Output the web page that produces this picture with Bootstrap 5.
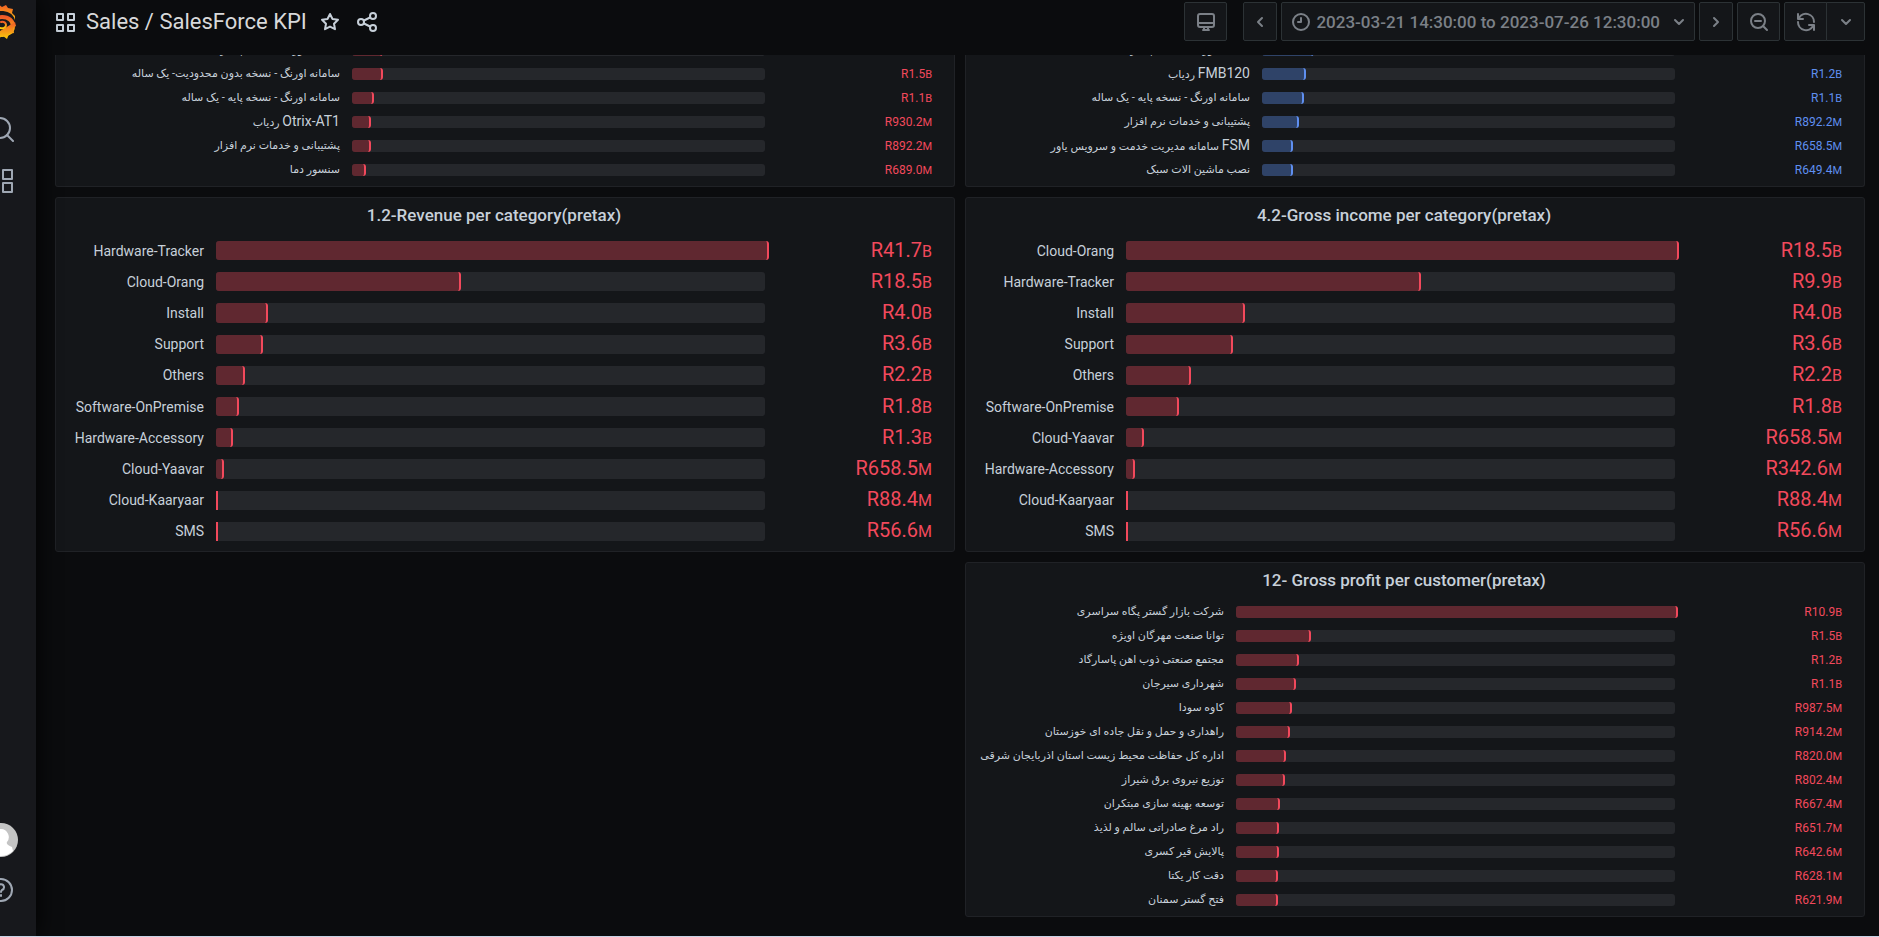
<!DOCTYPE html>
<html lang="en" data-bs-theme="dark">
<head>
<meta charset="utf-8">
<meta name="viewport" content="width=device-width, initial-scale=1">
<title>Sales / SalesForce KPI</title>
<link href="https://cdn.jsdelivr.net/npm/bootstrap@5.3.0/dist/css/bootstrap.min.css" rel="stylesheet">
<style>
:root { --page:#0b0c0e; --panel:#141619; --line:#202226; --ink:#c7d0d9; --dim:#7b8087; --track:#25272b; --hot:#f2495c; --hot-fill:#602830; }
body { background:var(--page); color:var(--ink); font-family:Roboto,"DejaVu Sans",sans-serif; font-size:14px; line-height:20px; border-bottom:1px solid #c9d3e6; }
svg { display:block; fill:none; stroke:currentColor; stroke-width:2; stroke-linecap:round; stroke-linejoin:round; }
.side { width:36px; background:#17181c; box-shadow:0 0 24px #000; z-index:1; color:#9fa7b3; }
.side-nav { width:74px; margin-left:-36px; padding-bottom:33px; }
.side-nav a { color:inherit; }
.logo-link { margin-bottom:76px; }
.help-link { margin-top:20px; }
.topbar { height:55px; padding:2px 14px 0 18px; }
.topbar h1 { font-size:22px; line-height:40px; font-weight:400; color:#d8d9da; margin:0 4px 0 10px; }
.topbar a { color:var(--ink); }
.tool { --bs-btn-color:var(--dim); --bs-btn-bg:var(--panel); --bs-btn-border-color:#2c3235; --bs-btn-border-radius:2px; --bs-btn-hover-bg:#202226; --bs-btn-hover-color:var(--ink); --bs-btn-padding-y:0; --bs-btn-padding-x:0; height:39px; min-width:43px; display:flex; align-items:center; justify-content:center; }
.tool.slim { min-width:34px; }
.tool.drop { min-width:39px; }
.tool.range { padding:0 9px; font-size:17px; line-height:24px; font-weight:500; gap:5px; }
.board { padding:0 14px 0 19px; }
.board .row { --bs-gutter-x:10px; }
.stack { display:flex; flex-direction:column; gap:10px; }
.panel { background:var(--panel); border:1px solid var(--line); border-radius:3px; padding:7px 22px 10px 14px; }
.panel.cut { height:132px; border-top:0; border-radius:0 0 3px 3px; padding-top:0; overflow:hidden; display:flex; flex-direction:column; justify-content:flex-end; }
.panel h2 { font-size:17px; line-height:20px; font-weight:500; color:var(--ink); text-align:center; margin:0 14px 16px 0; }
.bars { list-style:none; margin:0; padding:0; display:grid; gap:12px; grid-auto-rows:12px; }
.bars li { display:grid; grid-template-columns:var(--label) minmax(0,1fr) 167px; grid-template-rows:100%; align-items:center; }
.bars .name { text-align:right; padding-right:12px; white-space:nowrap; font-size:11px; }
.bars .name bdi { font-size:14px; }
.bars .rail { background:var(--track); height:100%; border-radius:3px; }
.bars .fill { display:block; height:100%; background:var(--hot-fill); border-right:2px solid var(--hot); border-radius:3px; }
.bars .tick { border-radius:0; }
.bars .amount { color:var(--hot); text-align:right; font-size:12px; }
.bars .amount span { font-size:11px; }
.blue { --hot:#5f8ff0; --hot-fill:#2f4368; }
.bars.large { height:300px; grid-auto-rows:minmax(0,1fr); }
.bars.large .name { font-size:14px; }
.bars.large .amount { font-size:20px; }
.bars.large .amount span { font-size:16px; }
.l-wide { --label:282px; }
.l-cat { --label:146px; }
.l-cust { --label:256px; }
</style>
</head>
<body class="d-flex min-vh-100 overflow-hidden">
<aside class="side flex-shrink-0 overflow-hidden">
  <nav class="side-nav d-flex flex-column align-items-center h-100" aria-label="Main">
    <a href="#" class="logo-link" aria-label="Home">
      <svg width="32" height="40" viewBox="0 0 32 40"><defs><linearGradient id="sun" x1="0" y1="0" x2="0" y2="1"><stop offset="0" stop-color="#f05a28"/><stop offset="1" stop-color="#fbca0a"/></linearGradient></defs><path fill="url(#sun)" stroke="none" d="M13 4l4 3 4-2 2 3 5 1-1 4 3 3 0 4c-2-7-8-9-14-9-8 0-13 5-13 12l-3-5 2-6 5-3z"/><path stroke="url(#sun)" stroke-width="4" d="M10 24c0-4 3-7 7-7 7 0 11 4 11 9 0 6-5 9-11 9"/><path fill="url(#sun)" stroke="none" d="M30 22l1 4-3 2 1 5-5 1-2 5-4-3-4 2-4-4z"/><path stroke="url(#sun)" stroke-width="2" d="M15 28c4 1 6-1 6-3s-2-4-5-3"/></svg>
    </a>
    <a href="#" aria-label="Search"><svg width="26" height="26" viewBox="0 0 26 26"><circle cx="12" cy="12" r="10"/><path d="M19 19l6 6"/></svg></a>
    <a href="#" class="mt-4" aria-label="Dashboards"><svg width="30" height="30" viewBox="0 0 30 30" stroke-linejoin="miter"><path d="M3 4h9v9H3zM17 4h9v9h-9zM3 17h9v9H3zM17 17h9v9h-9z"/></svg></a>
    <a href="#" class="mt-auto" aria-label="Profile"><svg width="34" height="34" viewBox="0 0 34 34"><circle cx="17" cy="17" r="17" fill="#c4c4c4" stroke="none"/><path fill="#fff" stroke="none" d="M17 6a8 8 0 0 1 6 13c-1 2 1 3 5 5l1 4a17 17 0 0 1-24 0l1-4c4-2 6-3 5-5a8 8 0 0 1 6-13z"/></svg></a>
    <a href="#" class="help-link" aria-label="Help"><svg width="26" height="26" viewBox="0 0 26 26"><circle cx="13" cy="13" r="11"/><path d="M10 10a3 3 0 1 1 4 3q-1 1-1 2M13 18v1"/></svg></a>
  </nav>
</aside>
<main class="flex-grow-1">
  <header class="topbar d-flex align-items-start justify-content-between">
    <div class="d-flex align-items-center">
      <a href="#" aria-label="Dashboards"><svg width="22" height="22" viewBox="0 0 22 22"><path d="M3 3h6v6H3zM14 3h6v6h-6zM3 14h6v6H3zM14 14h6v6h-6z"/></svg></a>
      <h1>Sales / SalesForce KPI</h1>
      <a href="#" class="ms-2" aria-label="Star"><svg width="22" height="22" viewBox="0 0 22 22"><path d="M11 3l2.500 5 5.500.8-4 3.900 1 5.500-5-2.600-5 2.600 1-5.500-4-3.900 5.500-.8z"/></svg></a>
      <a href="#" class="ms-3" aria-label="Share"><svg width="20" height="20" viewBox="0 0 20 20"><circle cx="4" cy="10" r="3"/><circle cx="16" cy="4" r="3"/><circle cx="16" cy="16" r="3"/><path d="M7 8.500l6-3M7 11.500l6 3"/></svg></a>
    </div>
    <div class="d-flex">
      <button class="btn tool" type="button" aria-label="Cycle view mode"><svg width="20" height="20" viewBox="0 0 20 20"><rect x="2" y="2" width="16" height="13" rx="2"/><path d="M2 11h16M7 18h6M8 15v3M12 15v3"/></svg></button>
      <button class="btn tool slim ms-3" type="button" aria-label="Back"><svg width="8" height="12" viewBox="0 0 8 12"><path d="M6 2L2 6l4 4"/></svg></button>
      <button class="btn tool range ms-1" type="button"><svg width="20" height="20" viewBox="0 0 20 20"><circle cx="10" cy="10" r="8"/><path d="M10 6v4H7"/></svg><span>2023-03-21 14:30:00 to 2023-07-26 12:30:00</span><svg class="ms-2" width="12" height="8" viewBox="0 0 12 8"><path d="M2 2l4 4 4-4"/></svg></button>
      <button class="btn tool slim ms-1" type="button" aria-label="Forward"><svg width="8" height="12" viewBox="0 0 8 12"><path d="M2 2l4 4-4 4"/></svg></button>
      <button class="btn tool ms-1" type="button" aria-label="Zoom out"><svg width="20" height="20" viewBox="0 0 20 20"><circle cx="9" cy="9" r="7"/><path d="M6 9h6M14 14l4 4"/></svg></button>
      <div class="btn-group ms-1"><button class="btn tool" type="button" aria-label="Refresh"><svg width="20" height="20" viewBox="0 0 20 20"><path d="M2 2v5h5M3 6a8 8 0 0 1 15 4M18 18v-5h-5M17 14a8 8 0 0 1-15-4"/></svg></button><button class="btn tool drop" type="button" aria-label="Interval"><svg width="12" height="8" viewBox="0 0 12 8"><path d="M2 2l4 4 4-4"/></svg></button></div>
    </div>
  </header>
  <div class="board">
    <div class="row">
      <div class="col-6 stack">
        <section class="panel cut l-wide">
          <ul class="bars">
            <li><span class="name">سامانه اورنگ - نسخه پیشرفته - یک ساله</span><div class="rail"><span class="fill" style="width:7.5%"></span></div></li>
            <li><span class="name">سامانه اورنگ - نسخه بدون محدودیت- یک ساله</span><div class="rail"><span class="fill" style="width:7.5%"></span></div><span class="amount">R1.5<span>B</span></span></li>
            <li><span class="name">سامانه اورنگ - نسخه پایه - یک ساله</span><div class="rail"><span class="fill" style="width:5.3%"></span></div><span class="amount">R1.1<span>B</span></span></li>
            <li><span class="name">ردیاب <bdi>Otrix-AT1</bdi></span><div class="rail"><span class="fill" style="width:4.6%"></span></div><span class="amount">R930.2<span>M</span></span></li>
            <li><span class="name">پشتیبانی و خدمات نرم افزار</span><div class="rail"><span class="fill" style="width:4.6%"></span></div><span class="amount">R892.2<span>M</span></span></li>
            <li><span class="name">سنسور دما</span><div class="rail"><span class="fill" style="width:3.4%"></span></div><span class="amount">R689.0<span>M</span></span></li>
          </ul>
        </section>
        <section class="panel l-cat">
          <h2>1.2-Revenue per category(pretax)</h2>
          <ul class="bars large">
            <li><span class="name">Hardware-Tracker</span><div class="rail"><span class="fill" style="width:100.7%"></span></div><span class="amount">R41.7<span>B</span></span></li>
            <li><span class="name">Cloud-Orang</span><div class="rail"><span class="fill" style="width:44.6%"></span></div><span class="amount">R18.5<span>B</span></span></li>
            <li><span class="name">Install</span><div class="rail"><span class="fill" style="width:9.5%"></span></div><span class="amount">R4.0<span>B</span></span></li>
            <li><span class="name">Support</span><div class="rail"><span class="fill" style="width:8.6%"></span></div><span class="amount">R3.6<span>B</span></span></li>
            <li><span class="name">Others</span><div class="rail"><span class="fill" style="width:5.3%"></span></div><span class="amount">R2.2<span>B</span></span></li>
            <li><span class="name">Software-OnPremise</span><div class="rail"><span class="fill" style="width:4.2%"></span></div><span class="amount">R1.8<span>B</span></span></li>
            <li><span class="name">Hardware-Accessory</span><div class="rail"><span class="fill" style="width:3.1%"></span></div><span class="amount">R1.3<span>B</span></span></li>
            <li><span class="name">Cloud-Yaavar</span><div class="rail"><span class="fill" style="width:1.5%"></span></div><span class="amount">R658.5<span>M</span></span></li>
            <li><span class="name">Cloud-Kaaryaar</span><div class="rail"><span class="fill tick" style="width:0.2%"></span></div><span class="amount">R88.4<span>M</span></span></li>
            <li><span class="name">SMS</span><div class="rail"><span class="fill tick" style="width:0.1%"></span></div><span class="amount">R56.6<span>M</span></span></li>
          </ul>
        </section>
      </div>
      <div class="col-6 stack">
        <section class="panel cut l-wide blue">
          <ul class="bars">
            <li><span class="name">سامانه اورنگ - نسخه پیشرفته - یک ساله</span><div class="rail"><span class="fill" style="width:12.5%"></span></div></li>
            <li><span class="name">ردیاب <bdi>FMB120</bdi></span><div class="rail"><span class="fill" style="width:10.7%"></span></div><span class="amount">R1.2<span>B</span></span></li>
            <li><span class="name">سامانه اورنگ - نسخه پایه - یک ساله</span><div class="rail"><span class="fill" style="width:10.2%"></span></div><span class="amount">R1.1<span>B</span></span></li>
            <li><span class="name">پشتیبانی و خدمات نرم افزار</span><div class="rail"><span class="fill" style="width:9%"></span></div><span class="amount">R892.2<span>M</span></span></li>
            <li><span class="name">سامانه مدیریت خدمت و سرویس یاور <bdi>FSM</bdi></span><div class="rail"><span class="fill" style="width:7.5%"></span></div><span class="amount">R658.5<span>M</span></span></li>
            <li><span class="name">نصب ماشین الات سبک</span><div class="rail"><span class="fill" style="width:7.5%"></span></div><span class="amount">R649.4<span>M</span></span></li>
          </ul>
        </section>
        <section class="panel l-cat">
          <h2>4.2-Gross income per category(pretax)</h2>
          <ul class="bars large">
            <li><span class="name">Cloud-Orang</span><div class="rail"><span class="fill" style="width:100.7%"></span></div><span class="amount">R18.5<span>B</span></span></li>
            <li><span class="name">Hardware-Tracker</span><div class="rail"><span class="fill" style="width:53.7%"></span></div><span class="amount">R9.9<span>B</span></span></li>
            <li><span class="name">Install</span><div class="rail"><span class="fill" style="width:21.6%"></span></div><span class="amount">R4.0<span>B</span></span></li>
            <li><span class="name">Support</span><div class="rail"><span class="fill" style="width:19.4%"></span></div><span class="amount">R3.6<span>B</span></span></li>
            <li><span class="name">Others</span><div class="rail"><span class="fill" style="width:11.8%"></span></div><span class="amount">R2.2<span>B</span></span></li>
            <li><span class="name">Software-OnPremise</span><div class="rail"><span class="fill" style="width:9.6%"></span></div><span class="amount">R1.8<span>B</span></span></li>
            <li><span class="name">Cloud-Yaavar</span><div class="rail"><span class="fill" style="width:3.3%"></span></div><span class="amount">R658.5<span>M</span></span></li>
            <li><span class="name">Hardware-Accessory</span><div class="rail"><span class="fill" style="width:1.6%"></span></div><span class="amount">R342.6<span>M</span></span></li>
            <li><span class="name">Cloud-Kaaryaar</span><div class="rail"><span class="fill tick" style="width:0.3%"></span></div><span class="amount">R88.4<span>M</span></span></li>
            <li><span class="name">SMS</span><div class="rail"><span class="fill tick" style="width:0.3%"></span></div><span class="amount">R56.6<span>M</span></span></li>
          </ul>
        </section>
        <section class="panel l-cust">
          <h2>12- Gross profit per customer(pretax)</h2>
          <ul class="bars">
            <li><span class="name">شرکت بازار گستر پگاه سراسری</span><div class="rail"><span class="fill" style="width:100.7%"></span></div><span class="amount">R10.9<span>B</span></span></li>
            <li><span class="name">توانا صنعت مهرگان اویژه</span><div class="rail"><span class="fill" style="width:17.1%"></span></div><span class="amount">R1.5<span>B</span></span></li>
            <li><span class="name">مجتمع صنعتی ذوب اهن پاسارگاد</span><div class="rail"><span class="fill" style="width:14.4%"></span></div><span class="amount">R1.2<span>B</span></span></li>
            <li><span class="name">شهرداری سیرجان</span><div class="rail"><span class="fill" style="width:13.7%"></span></div><span class="amount">R1.1<span>B</span></span></li>
            <li><span class="name">کاوه سودا</span><div class="rail"><span class="fill" style="width:12.8%"></span></div><span class="amount">R987.5<span>M</span></span></li>
            <li><span class="name">راهداری و حمل و نقل جاده ای خوزستان</span><div class="rail"><span class="fill" style="width:12.3%"></span></div><span class="amount">R914.2<span>M</span></span></li>
            <li><span class="name">اداره کل حفاظت محیط زیست استان اذربایجان شرقی</span><div class="rail"><span class="fill" style="width:11.4%"></span></div><span class="amount">R820.0<span>M</span></span></li>
            <li><span class="name">توزیع نیروی برق شیراز</span><div class="rail"><span class="fill" style="width:11.2%"></span></div><span class="amount">R802.4<span>M</span></span></li>
            <li><span class="name">توسعه بهینه سازی مبتکران</span><div class="rail"><span class="fill" style="width:10%"></span></div><span class="amount">R667.4<span>M</span></span></li>
            <li><span class="name">راد مرغ صادراتی سالم و لذیذ</span><div class="rail"><span class="fill" style="width:9.8%"></span></div><span class="amount">R651.7<span>M</span></span></li>
            <li><span class="name">پالایش قیر کسری</span><div class="rail"><span class="fill" style="width:9.8%"></span></div><span class="amount">R642.6<span>M</span></span></li>
            <li><span class="name">دقت کار یکتا</span><div class="rail"><span class="fill" style="width:9.6%"></span></div><span class="amount">R628.1<span>M</span></span></li>
            <li><span class="name">فتح گستر سمنان</span><div class="rail"><span class="fill" style="width:9.6%"></span></div><span class="amount">R621.9<span>M</span></span></li>
          </ul>
        </section>
      </div>
    </div>
  </div>
</main>
<script src="https://cdn.jsdelivr.net/npm/bootstrap@5.3.0/dist/js/bootstrap.bundle.min.js"></script>
</body>
</html>
